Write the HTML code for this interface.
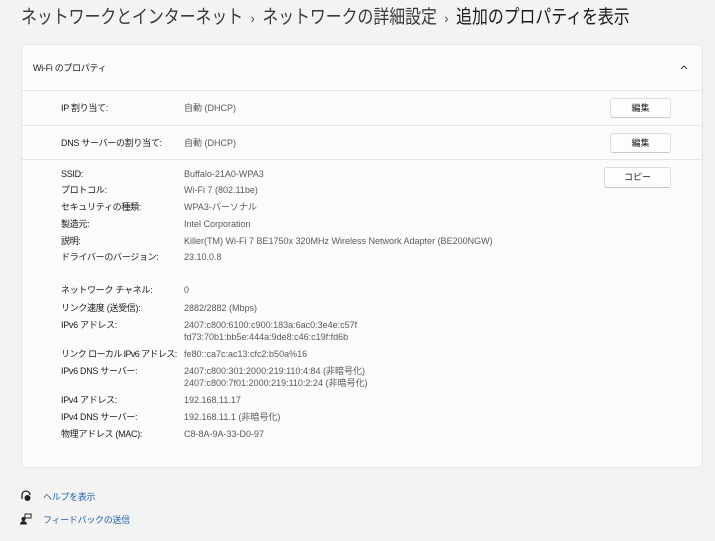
<!DOCTYPE html>
<html><head><meta charset="utf-8"><style>
body{margin:0;width:715px;height:541px;background:#f3f3f3;font-family:"Liberation Sans","Noto Sans CJK JP",sans-serif;position:relative;overflow:hidden;color:#1a1a1a}
.a{position:absolute;white-space:nowrap;font-size:9px;line-height:12px;letter-spacing:-0.3px}
.t{position:absolute;left:21px;top:4px;font-size:19px;line-height:28px;color:#1a1a1a;white-space:nowrap;transform:scaleX(0.835);transform-origin:0 0}
.t .g{color:#3a3a3a}
.card{position:absolute;left:21px;top:44px;width:680px;height:422px;background:#fbfbfb;border:1px solid #e5e5e5;border-radius:4px}
.sep{position:absolute;left:22px;width:680px;height:1px;background:#e5e5e5}
.btn{position:absolute;background:#fdfdfd;border:1px solid #dcdcdc;border-bottom-color:#c8c8c8;border-radius:3px;font-size:9px;text-align:center;line-height:18px}
.a.v{color:#5a5a5a;letter-spacing:0}
.l{color:#1f5fa8}
</style></head><body>
<div class="t"><span class="g">ネットワークとインターネット</span> <span class="g" style="font-size:14px">&nbsp;›&nbsp;</span> <span class="g">ネットワークの詳細設定</span> <span class="g" style="font-size:14px">&nbsp;›&nbsp;</span> 追加のプロパティを表示</div>
<div class="card"></div>
<div class="a" style="left:33px;top:62px">Wi-Fi のプロパティ</div>
<svg style="position:absolute;left:680px;top:64px" width="8" height="6" viewBox="0 0 8 6"><path d="M1 5L4 2L7 5" fill="none" stroke="#333" stroke-width="0.9"/></svg>
<div class="sep" style="top:90px"></div>
<div class="a" style="left:61px;top:102px">IP 割り当て:</div><div class="a v" style="left:184px;top:102px">自動 (DHCP)</div>
<div class="btn" style="left:610px;top:98px;width:59px;height:18px">編集</div>
<div class="sep" style="top:125px"></div>
<div class="a" style="left:61px;top:137px">DNS サーバーの割り当て:</div><div class="a v" style="left:184px;top:137px">自動 (DHCP)</div>
<div class="btn" style="left:610px;top:133px;width:59px;height:18px">編集</div>
<div class="sep" style="top:159px"></div>
<div class="btn" style="left:604px;top:167px;width:65px;height:19px">コピー</div>
<div class="a" style="left:61px;top:168px">SSID:</div><div class="a v" style="left:184px;top:168px">Buffalo-21A0-WPA3</div>
<div class="a" style="left:61px;top:184px">プロトコル:</div><div class="a v" style="left:184px;top:184px">Wi-Fi 7 (802.11be)</div>
<div class="a" style="left:61px;top:201px">セキュリティの種類:</div><div class="a v" style="left:184px;top:201px">WPA3-パーソナル</div>
<div class="a" style="left:61px;top:218px">製造元:</div><div class="a v" style="left:184px;top:218px">Intel Corporation</div>
<div class="a" style="left:61px;top:235px">説明:</div><div class="a v" style="left:184px;top:235px">Killer(TM) Wi-Fi 7 BE1750x 320MHz Wireless Network Adapter (BE200NGW)</div>
<div class="a" style="left:61px;top:251px">ドライバーのバージョン:</div><div class="a v" style="left:184px;top:251px">23.10.0.8</div>
<div class="a" style="left:61px;top:284px">ネットワーク チャネル:</div><div class="a v" style="left:184px;top:284px">0</div>
<div class="a" style="left:61px;top:302px">リンク速度 (送受信):</div><div class="a v" style="left:184px;top:302px">2882/2882 (Mbps)</div>
<div class="a" style="left:61px;top:319px">IPv6 アドレス:</div><div class="a v" style="left:184px;top:319px">2407:c800:6100:c900:183a:6ac0:3e4e:c57f</div>
<div class="a v" style="left:184px;top:331px">fd73:70b1:bb5e:444a:9de8:c46:c19f:fd6b</div>
<div class="a" style="left:61px;top:348px;letter-spacing:-0.6px">リンク ローカル IPv6 アドレス:</div><div class="a v" style="left:184px;top:348px">fe80::ca7c:ac13:cfc2:b50a%16</div>
<div class="a" style="left:61px;top:365px">IPv6 DNS サーバー:</div><div class="a v" style="left:184px;top:365px">2407:c800:301:2000:219:110:4:84 (非暗号化)</div>
<div class="a v" style="left:184px;top:377px">2407:c800:7f01:2000:219:110:2:24 (非暗号化)</div>
<div class="a" style="left:61px;top:394px">IPv4 アドレス:</div><div class="a v" style="left:184px;top:394px">192.168.11.17</div>
<div class="a" style="left:61px;top:411px">IPv4 DNS サーバー:</div><div class="a v" style="left:184px;top:411px">192.168.11.1 (非暗号化)</div>
<div class="a" style="left:61px;top:428px">物理アドレス (MAC):</div><div class="a v" style="left:184px;top:428px">C8-8A-9A-33-D0-97</div>
<svg style="position:absolute;left:20px;top:490px" width="12" height="12" viewBox="0 0 12 12"><path d="M2 9V5a4 4 0 0 1 8 0" fill="none" stroke="#222" stroke-width="1.3"/><circle cx="7.5" cy="8" r="3" fill="#222"/></svg>
<div class="a l" style="left:43px;top:491px">ヘルプを表示</div>
<svg style="position:absolute;left:20px;top:513px" width="12" height="12" viewBox="0 0 12 12"><rect x="5" y="1" width="6" height="4" fill="none" stroke="#222"/><circle cx="3.5" cy="6" r="2" fill="#222"/><path d="M0 11.5a3.5 3.5 0 0 1 7 0z" fill="#222"/></svg>
<div class="a l" style="left:43px;top:514px">フィードバックの送信</div>
</body></html>
